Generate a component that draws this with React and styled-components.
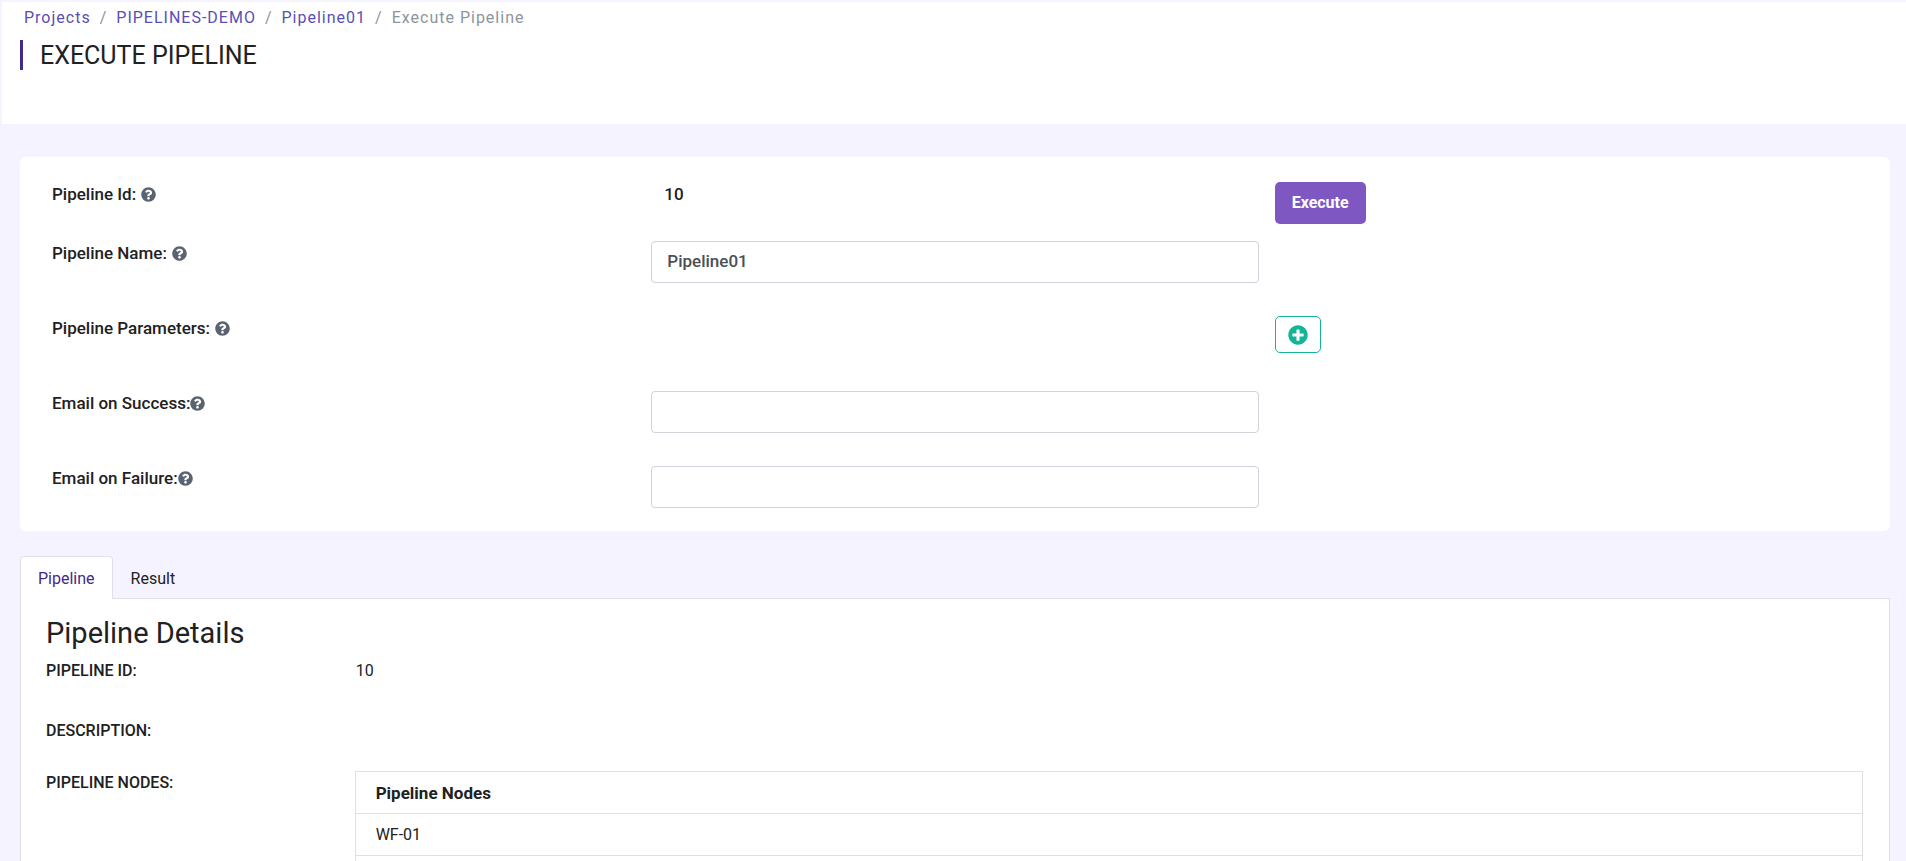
import React, { useState } from "react";
import styled, { createGlobalStyle } from "styled-components";
import { FaQuestionCircle, FaPlusCircle } from "react-icons/fa";

const GlobalStyle = createGlobalStyle`
  *, *::before, *::after { box-sizing: border-box; }
  body {
    margin: 0;
    background: #f5f3ff;
    color: #212529;
    font-family: Roboto, "Liberation Sans", sans-serif;
    font-size: 16px;
    line-height: 24px;
  }
`;

const Header = styled.header`
  margin: 2px 0 0 2px;
  padding: 4px 18px 54px;
  background: #fff;
`;

const Breadcrumb = styled.ol`
  display: flex;
  gap: 9px;
  margin: 0 0 10px;
  padding: 0 0 0 4px;
  list-style: none;
  letter-spacing: 1px;
  color: #8c959d;
`;

const Crumb = styled.li`
  display: flex;
  gap: 9px;

  & + &::before { content: "/"; }
`;

const CrumbLink = styled.a`
  color: #5a4fb5;
  text-decoration: none;
`;

const PageTitle = styled.h1`
  margin: 0;
  padding: 1px 0 0 17px;
  border-left: 3px solid #432a8a;
  font-size: 25px;
  font-weight: 400;
  line-height: 29px;
  color: #212121;
`;

const Main = styled.main`
  padding: 33px 16px 20px 20px;
`;

const Card = styled.form`
  display: flex;
  flex-direction: column;
  gap: 33px;
  padding: 25px 0 23px;
  border-radius: 6px;
  background: #fff;
`;

const FormRow = styled.div`
  display: grid;
  grid-template-columns: repeat(3, 1fr);
  min-height: 42px;
  margin-bottom: ${(p) => (p.$short ? "-16px" : "0")};
`;

const Cell = styled.div`
  padding: 0 8px 0 ${(p) => (p.$label ? "32px" : "8px")};
`;

const Label = styled.label`
  font-size: 17px;
  font-weight: 500;
  color: #212121;
`;

const HelpIcon = styled(FaQuestionCircle)`
  width: 15px;
  height: 15px;
  margin-left: ${(p) => (p.$tight ? "0" : "5px")};
  vertical-align: -2px;
  color: #5c6370;
`;

const IdValue = styled.output`
  display: block;
  padding-left: 13px;
  font-size: 17px;
  font-weight: 500;
  color: #212121;
`;

const TextInput = styled.input`
  display: block;
  width: 100%;
  height: 42px;
  padding: 6px 15px 8px;
  border: 1px solid #ced4da;
  border-radius: 4px;
  background: #fff;
  font: inherit;
  font-size: 17px;
  font-weight: 500;
  color: #495057;
`;

const ExecuteButton = styled.button`
  height: 42px;
  padding: 0 17px;
  border: 0;
  border-radius: 5px;
  background: #7e57c2;
  font: inherit;
  font-weight: 700;
  color: #fff;
`;

const AddButton = styled.button`
  display: flex;
  align-items: center;
  justify-content: center;
  width: 46px;
  height: 37px;
  padding: 0;
  border: 1px solid #13b497;
  border-radius: 5px;
  background: #fff;
  font-size: 20px;
  color: #13b497;
`;

const TabList = styled.div`
  display: flex;
  margin-top: 25px;
`;

const Tab = styled.button`
  height: 43px;
  padding: 1px 17px 0;
  border: 1px solid ${(p) => (p.$active ? "#dee2e6" : "transparent")};
  border-bottom: 0;
  border-radius: 4px 4px 0 0;
  margin-bottom: -1px;
  z-index: 1;
  background: ${(p) => (p.$active ? "#fff" : "transparent")};
  font: inherit;
  color: ${(p) => (p.$active ? "#432a8a" : "#212121")};
`;

const Panel = styled.section`
  padding: 16px 11px 24px;
  border: 1px solid #dee2e6;
  background: #fff;
`;

const PanelTitle = styled.h2`
  margin: 0 14px;
  font-size: 29px;
  font-weight: 400;
  line-height: 36px;
  color: #212121;
`;

const Details = styled.dl`
  display: grid;
  grid-template-columns: 2fr 10fr;
  margin: 8px 0 0;
`;

const Term = styled.dt`
  padding: 0 14px;
  min-height: ${(p) => (p.$tall ? "60px" : "52px")};
  font-weight: 500;
  color: #212121;
`;

const Description = styled.dd`
  margin: 0;
  padding: 0 15px 0 16px;
`;

const TableCell = styled.dd`
  margin: 0;
  padding: 0 15px;
`;

const Table = styled.table`
  width: 100%;
  border-collapse: collapse;

  th, td {
    height: 42px;
    padding: 0 20px;
    border: 1px solid #dee2e6;
    text-align: left;
    color: #212121;
  }

  th {
    font-size: 17px;
    font-weight: 700;
  }
`;

const crumbs = ["Projects", "PIPELINES-DEMO", "Pipeline01"];
const nodes = ["WF-01", ""];
const tabs = ["Pipeline", "Result"];

function FieldLabel({ htmlFor, tight, children }) {
  return (
    <Cell $label>
      <Label htmlFor={htmlFor}>{children}</Label>
      <HelpIcon $tight={tight} aria-hidden="true" />
    </Cell>
  );
}

export default function App() {
  const [active, setActive] = useState("Pipeline");
  const [name, setName] = useState("Pipeline01");

  return (
    <>
      <GlobalStyle />
      <Header>
        <nav aria-label="Breadcrumb">
          <Breadcrumb>
            {crumbs.map((crumb) => (
              <Crumb key={crumb}><CrumbLink href="#">{crumb}</CrumbLink></Crumb>
            ))}
            <Crumb aria-current="page">Execute Pipeline</Crumb>
          </Breadcrumb>
        </nav>
        <PageTitle>EXECUTE PIPELINE</PageTitle>
      </Header>

      <Main>
        <Card onSubmit={(e) => e.preventDefault()}>
          <FormRow $short>
            <FieldLabel htmlFor="pipeline-id">Pipeline Id:</FieldLabel>
            <Cell><IdValue id="pipeline-id">10</IdValue></Cell>
            <Cell><ExecuteButton type="submit">Execute</ExecuteButton></Cell>
          </FormRow>
          <FormRow>
            <FieldLabel htmlFor="pipeline-name">Pipeline Name:</FieldLabel>
            <Cell>
              <TextInput id="pipeline-name" value={name} onChange={(e) => setName(e.target.value)} />
            </Cell>
          </FormRow>
          <FormRow>
            <FieldLabel htmlFor="add-parameter">Pipeline Parameters:</FieldLabel>
            <Cell />
            <Cell>
              <AddButton id="add-parameter" type="button"><FaPlusCircle /></AddButton>
            </Cell>
          </FormRow>
          <FormRow>
            <FieldLabel htmlFor="email-success" tight>Email on Success:</FieldLabel>
            <Cell><TextInput id="email-success" /></Cell>
          </FormRow>
          <FormRow>
            <FieldLabel htmlFor="email-failure" tight>Email on Failure:</FieldLabel>
            <Cell><TextInput id="email-failure" /></Cell>
          </FormRow>
        </Card>

        <TabList role="tablist">
          {tabs.map((tab) => (
            <Tab
              key={tab}
              type="button"
              role="tab"
              aria-selected={active === tab}
              $active={active === tab}
              onClick={() => setActive(tab)}
            >
              {tab}
            </Tab>
          ))}
        </TabList>
        <Panel role="tabpanel">
          <PanelTitle>Pipeline Details</PanelTitle>
          <Details>
            <Term $tall>PIPELINE ID:</Term>
            <Description>10</Description>
            <Term>DESCRIPTION:</Term>
            <Description />
            <Term>PIPELINE NODES:</Term>
            <TableCell>
              <Table>
                <thead>
                  <tr><th scope="col">Pipeline Nodes</th></tr>
                </thead>
                <tbody>
                  {nodes.map((node, i) => (
                    <tr key={i}><td>{node}</td></tr>
                  ))}
                </tbody>
              </Table>
            </TableCell>
          </Details>
        </Panel>
      </Main>
    </>
  );
}
